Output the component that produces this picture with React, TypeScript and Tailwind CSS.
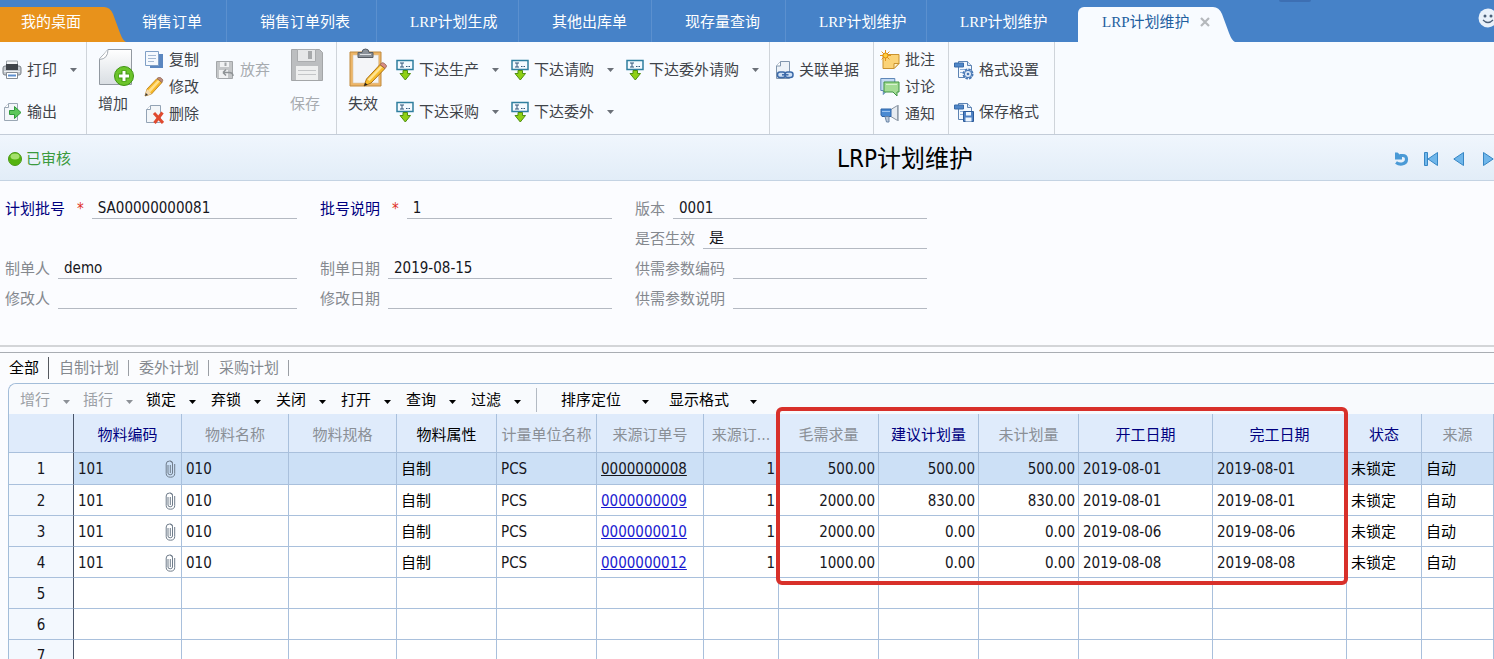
import React from "react";
import clsx from "clsx";

const tabs = [
  { name: "销售订单", className: "w-[101px] pl-4" },
  { name: "销售订单列表", className: "w-[150px] pl-[33px]" },
  { name: "LRP计划生成", className: "w-[142px] pl-[33px]" },
  { name: "其他出库单", className: "w-[133px] pl-[33px]" },
  { name: "现存量查询", className: "w-[134px] pl-[33px]" },
  { name: "LRP计划维护", className: "w-[141px] pl-[33px]" },
  { name: "LRP计划维护", className: "w-[142px] pl-[33px]" },
];

const gridActions = ["锁定", "弃锁", "关闭", "打开", "查询", "过滤"];

const columns = [
  { title: "物料编码", width: "w-[108px]", color: "text-[#00007f]" },
  { title: "物料名称", width: "w-[107px]", color: "text-[#8a8f96]" },
  { title: "物料规格", width: "w-[108px]", color: "text-[#8a8f96]" },
  { title: "物料属性", width: "w-[100px]", color: "text-black" },
  { title: "计量单位名称", width: "w-[100px]", color: "text-[#8a8f96]" },
  { title: "来源订单号", width: "w-[107px]", color: "text-[#8a8f96]" },
  { title: "来源订…", width: "w-[75px]", color: "text-[#8a8f96]" },
  { title: "毛需求量", width: "w-[100px]", color: "text-[#8a8f96]" },
  { title: "建议计划量", width: "w-[100px]", color: "text-[#00007f]" },
  { title: "未计划量", width: "w-[100px]", color: "text-[#8a8f96]" },
  { title: "开工日期", width: "w-[134px]", color: "text-[#00007f]" },
  { title: "完工日期", width: "w-[134px]", color: "text-[#00007f]" },
  { title: "状态", width: "w-[75px]", color: "text-[#00007f]" },
  { title: "来源", width: "", color: "text-[#8a8f96]" },
];

const rows = [
  { order: "0000000008", gross: "500.00", plan: "500.00", rest: "500.00", start: "2019-08-01", end: "2019-08-01" },
  { order: "0000000009", gross: "2000.00", plan: "830.00", rest: "830.00", start: "2019-08-01", end: "2019-08-01" },
  { order: "0000000010", gross: "2000.00", plan: "0.00", rest: "0.00", start: "2019-08-06", end: "2019-08-06" },
  { order: "0000000012", gross: "1000.00", plan: "0.00", rest: "0.00", start: "2019-08-08", end: "2019-08-08" },
];

/* ---------- icons ---------- */

const Caret = ({ className = "text-[#6b7078]" }: { className?: string }) => (
  <svg className={clsx("h-1 w-[7px] shrink-0", className)} viewBox="0 0 7 4">
    <path d="M0 0h7L3.5 4z" fill="currentColor" />
  </svg>
);

const PrintIcon = () => (
  <svg className="h-5 w-5 shrink-0" viewBox="0 0 20 20">
    <path d="M4.500 1h11v6h-11z" fill="#f4f6f8" stroke="#9aa1a8" />
    <rect x="1" y="6" width="18" height="9" rx="2" fill="#c3c8ce" stroke="#7a8087" />
    <rect x="4" y="4" width="12" height="6" fill="#3f444a" />
    <path d="M2 11.500h16" stroke="#eef0f2" />
    <path d="M4.500 12.500h11v6h-11z" fill="#fff" stroke="#858b92" />
    <path d="M6 15.500h8" stroke="#5d8fcf" strokeWidth="2" />
  </svg>
);

const ExportIcon = () => (
  <svg className="h-5 w-5 shrink-0" viewBox="0 0 20 20">
    <path d="M2.500 5.500l4-4h9v17h-13z" fill="#f3f6f9" stroke="#9aa7b4" />
    <path d="M2.500 5.500h4v-4" fill="#fff" stroke="#9aa7b4" />
    <path d="M7.500 8.500h5v-4l6.500 6-6.500 6v-4h-5z" fill="#5cc75a" stroke="#2f9a3a" />
  </svg>
);

const AddIcon = () => (
  <svg className="h-[39px] w-[37px]" viewBox="0 0 37 39">
    <defs>
      <linearGradient id="sheet" x1="0" y1="0" x2="0" y2="1">
        <stop offset="0" stopColor="#fff" />
        <stop offset="1" stopColor="#d9dee3" />
      </linearGradient>
    </defs>
    <path d="M1.500 11L10 1.500h23.500v35h-32z" fill="url(#sheet)" stroke="#9299a1" />
    <path d="M1.500 11.500Q10 11 10 1.500" fill="#fff" stroke="#a5abb2" />
    <circle cx="26" cy="28" r="9.500" fill="#6cc42b" stroke="#3f9412" />
    <path d="M26 22.500v11M20.500 28h11" stroke="#3f9412" strokeWidth="5" />
    <path d="M26 23v10M21 28h10" stroke="#fff" strokeWidth="3" />
  </svg>
);

const CopyIcon = () => (
  <svg className="h-5 w-5 shrink-0" viewBox="0 0 20 20">
    <path d="M6 4h13v14H6z" fill="#5a86c0" />
    <path d="M1.500 1.500h13v14h-13z" fill="#f5f9fe" stroke="#7f9fc6" />
    <path d="M4 5.500h8M4 8.500h8M4 11.500h6" stroke="#a4b9d3" />
  </svg>
);

const PencilIcon = () => (
  <svg className="h-5 w-5 shrink-0" viewBox="0 0 20 20">
    <path d="M1 19l2-7L13 1.500l5 4L7.500 17z" fill="#f7b928" stroke="#b57a15" strokeWidth=".8" />
    <path d="M4 13.500L14 3l1.800 1.400L6 15.500z" fill="#ffe08a" />
    <path d="M13 1.500l1.500-1.200q1-.5 2 .3l1.800 1.500q1 1 .3 1.900L18 5.500z" fill="#b98a7c" stroke="#8a5c45" strokeWidth=".6" />
    <path d="M1 19l2-7 4.500 5z" fill="#f3d9ae" />
    <path d="M1 19l.9-3 2.100 2z" fill="#333" />
  </svg>
);

const DeleteIcon = () => (
  <svg className="h-5 w-5 shrink-0" viewBox="0 0 20 20">
    <path d="M2.500 5.500l4-4h10v17h-14z" fill="#f3f6f9" stroke="#93a3b5" />
    <path d="M2.500 5.500h4v-4" fill="#fff" stroke="#93a3b5" />
    <path d="M10 9l9 10M18.500 8.500l-8 10.500" stroke="#e04a2f" strokeWidth="3" />
  </svg>
);

const DiscardIcon = () => (
  <svg className="h-5 w-5 shrink-0" viewBox="0 0 20 20">
    <path d="M1.500 1.500h16v17h-15l-1-1z" fill="#c4c6c8" stroke="#a3a6a9" />
    <path d="M5 2h9v5H5z" fill="#f1f2f3" />
    <path d="M10.500 2.500v3.500" stroke="#a3a6a9" strokeWidth="2" />
    <path d="M4 10h9v8H4z" fill="#f1f2f3" />
    <path d="M8 12.500h6q4 0 4 3.500M8 12.500l3-3M8 12.500l3 3" fill="none" stroke="#8f9396" strokeWidth="1.500" />
  </svg>
);

const SaveIcon = () => (
  <svg className="h-[34px] w-[34px]" viewBox="0 0 34 34">
    <path d="M1.500 1.500h28l3 3v28h-31z" fill="#bcbec0" stroke="#a4a6a8" />
    <path d="M7.500 1.500h18v12h-18z" fill="#e6e7e8" stroke="#aaacae" />
    <path d="M18 3h4v8h-4z" fill="#a7a9ab" />
    <path d="M6 18h22v14H6z" fill="#eeefef" />
    <path d="M8 22.500h18M8 26.500h18" stroke="#c3c5c7" />
  </svg>
);

const InvalidIcon = () => (
  <svg className="h-[40px] w-[39px]" viewBox="0 0 39 40">
    <path d="M2 4h31v34H2z" fill="#edb567" stroke="#c08a3f" />
    <path d="M5 7h25.500v28H5z" fill="#f4f5f8" stroke="#d9c7ac" strokeWidth=".6" />
    <path d="M10 9.500V4.500h4Q14 1 17.500 1T21 4.500h4v5z" fill="#8b9199" stroke="#565c64" />
    <path d="M12 6.500h11" stroke="#dde0e4" />
    <path d="M16 38l2.500-7L32 16.500l5 4L23 35z" fill="#f8bd2c" stroke="#a9701a" />
    <path d="M19.500 31.500L32.500 18l1.800 1.500L21.500 33z" fill="#ffe492" />
    <path d="M32 16.500l1.500-1.500q1.300-.8 2.500.2l2 1.700q1 1.100.2 2.100L37 20.500z" fill="#d98d83" stroke="#8a5c45" strokeWidth=".7" />
    <path d="M16 38l1.200-3.300 2.400 2z" fill="#222" />
  </svg>
);

const IssueIcon = () => (
  <svg className="h-[22px] w-[18px] shrink-0" viewBox="0 0 18 22">
    <path d="M1 1.500h16v9H1z" fill="#f4faff" stroke="#2f7f9f" strokeWidth="1.500" />
    <path d="M4 4h4M6 4v4M4 8h4M10 7.500h1.500M12.500 7.500H14" stroke="#30577a" />
    <path d="M7 11.500h4.500V14.500H14.500l-5.200 6.500L4 14.500h3z" fill="#8fd014" stroke="#4f8f12" />
  </svg>
);

const LinkedIcon = () => (
  <svg className="h-5 w-5 shrink-0" viewBox="0 0 20 20">
    <path d="M2.500 6l4-4.500h9v17h-13z" fill="#eef3f8" stroke="#8296ad" />
    <path d="M2.500 6h4V1.500" fill="#fff" stroke="#8296ad" />
    <rect x="3.500" y="12" width="8" height="5.500" rx="2.500" fill="#cfe0f5" stroke="#3b69a8" strokeWidth="1.500" />
    <rect x="11" y="12" width="8" height="5.500" rx="2.500" fill="#cfe0f5" stroke="#3b69a8" strokeWidth="1.500" />
    <path d="M8 14.800h6.500" stroke="#3b69a8" strokeWidth="1.500" />
  </svg>
);

const NoteIcon = () => (
  <svg className="h-5 w-5 shrink-0" viewBox="0 0 20 20">
    <path d="M3 4.500h16v9l-5 5H3z" fill="#fbd377" stroke="#c9922f" />
    <path d="M19 13.500h-5v5z" fill="#fff2cc" stroke="#c9922f" />
    <path d="M5.500 0v11M0 5.500h11M1.600 1.600l7.800 7.800M9.400 1.600L1.600 9.400" stroke="#e69316" />
    <circle cx="5.500" cy="5.500" r="2.500" fill="#ffcf3e" stroke="#dc8b12" />
  </svg>
);

const ChatIcon = () => (
  <svg className="h-5 w-5 shrink-0" viewBox="0 0 20 20">
    <path d="M.8 1.500h14v12h-8l-3.500 4v-4H.8z" fill="#c4daf3" stroke="#5f87b8" />
    <path d="M4 5h15v10h-2v4l-4-4H4z" fill="#a4dc95" stroke="#3f9343" />
    <path d="M6 7.500h11" stroke="#d7f2cf" />
  </svg>
);

const NoticeIcon = () => (
  <svg className="h-5 w-5 shrink-0" viewBox="0 0 20 20">
    <path d="M10 6l7.500-4.500v15L10 12z" fill="#e6ebf1" stroke="#8893a0" />
    <path d="M1 5h10v7.500H2L1 11z" fill="#4a8ad2" stroke="#2d62a5" />
    <path d="M2 7.500h8" stroke="#9cc4f1" />
    <path d="M5 12.500h4v5.500H6.500z" fill="#b9c8da" stroke="#6884a6" />
    <path d="M18 1v16" stroke="#9aa4b0" strokeWidth="1.500" />
  </svg>
);

const FormatIcon = ({ saved }: { saved?: boolean }) => (
  <svg className="h-5 w-5 shrink-0" viewBox="0 0 20 20">
    <path d="M4.500 1.500h9l4 4v12h-13z" fill="#f3f8fe" stroke="#5d83b3" />
    <path d="M13.500 1.500v4h4" fill="#dbe8f8" stroke="#5d83b3" />
    <path d="M.5 3h9v4h-9z" fill="#4f86c8" stroke="#386aa8" />
    <path d="M6 9.500h5M6 12.500h4" stroke="#8fb0da" />
    {saved ? (
      <>
        <path d="M9.500 9.500h10v10h-10z" fill="#4d80c4" stroke="#2c5a98" />
        <path d="M12 10h5v3.500h-5zM11.500 15.500h6v4h-6z" fill="#eef5fd" />
      </>
    ) : (
      <>
        <circle cx="14" cy="14" r="4.500" fill="#dfeaf8" stroke="#4676b4" strokeWidth="2" strokeDasharray="2.400 1.100" />
        <circle cx="14" cy="14" r="3.600" fill="#dfeaf8" stroke="#4676b4" />
        <circle cx="14" cy="14" r="1.300" fill="#4676b4" />
      </>
    )}
  </svg>
);

const ClipIcon = () => (
  <svg className="h-[18px] w-[11px]" viewBox="0 0 11 18">
    <path
      d="M3 5v8q0 1.800 2.200 1.800T7.500 13V3.500Q7.500 1 5.300 1M9.700 4v9.500q0 3.700-4.200 3.700T1.200 13.500V4Q1.200 1 4.700 1q2.800 0 2.800 2.700M5.300 5v8"
      fill="none"
      stroke="#6f7c8a"
    />
  </svg>
);

/* ---------- ribbon ---------- */

type ToolProps = {
  icon: React.ReactNode;
  label: string;
  caret?: boolean;
  disabled?: boolean;
  className?: string;
};

const Tool = ({ icon, label, caret, disabled, className = "h-[42px]" }: ToolProps) => (
  <button
    type="button"
    disabled={disabled}
    className={clsx("flex items-center gap-[5px] whitespace-nowrap", disabled && "text-[#a7abb0]", className)}
  >
    {icon}
    <span>{label}</span>
    {caret && <Caret className="ml-2 text-[#6b7078]" />}
  </button>
);

const BigTool = ({ icon, label, disabled }: ToolProps) => (
  <button
    type="button"
    disabled={disabled}
    className={clsx("flex flex-col items-start whitespace-nowrap", disabled && "text-[#a7abb0]")}
  >
    <span className="flex h-[45px] items-start">{icon}</span>
    <span>{label}</span>
  </button>
);

const Ribbon = () => (
  <div className="flex h-[93px] shrink-0 border-b border-[#c3ccd8] bg-[#f8fbff] text-[#3f4349] *:shrink-0 *:border-r *:border-[#cfd4da]">
    <div className="flex w-[87px] flex-col pt-[7px] pl-[2px]">
      <Tool icon={<PrintIcon />} label="打印" caret />
      <Tool icon={<ExportIcon />} label="输出" />
    </div>
    <div className="flex w-[250px] pl-[11px]">
      <div className="w-[46px] pt-1.5">
        <BigTool icon={<AddIcon />} label="增加" />
      </div>
      <div className="flex w-[71px] flex-col pt-1">
        <Tool icon={<CopyIcon />} label="复制" className="h-[27px]" />
        <Tool icon={<PencilIcon />} label="修改" className="h-[27px]" />
        <Tool icon={<DeleteIcon />} label="删除" className="h-[27px]" />
      </div>
      <div className="w-[75px] pt-[7px]">
        <Tool icon={<DiscardIcon />} label="放弃" disabled />
      </div>
      <div className="pt-1.5">
        <BigTool icon={<SaveIcon />} label="保存" disabled />
      </div>
    </div>
    <div className="flex w-[433px] pl-[11px]">
      <div className="w-12 pt-1.5">
        <BigTool icon={<InvalidIcon />} label="失效" />
      </div>
      <div className="w-[115px] pt-[7px]">
        <Tool icon={<IssueIcon />} label="下达生产" caret />
        <Tool icon={<IssueIcon />} label="下达采购" caret />
      </div>
      <div className="w-[115px] pt-[7px]">
        <Tool icon={<IssueIcon />} label="下达请购" caret />
        <Tool icon={<IssueIcon />} label="下达委外" caret />
      </div>
      <div className="pt-[7px]">
        <Tool icon={<IssueIcon />} label="下达委外请购" caret />
      </div>
    </div>
    <div className="w-[104px] pt-[7px] pl-1">
      <Tool icon={<LinkedIcon />} label="关联单据" />
    </div>
    <div className="w-[75px] pt-1 pl-1.5">
      <Tool icon={<NoteIcon />} label="批注" className="h-[27px]" />
      <Tool icon={<ChatIcon />} label="讨论" className="h-[27px]" />
      <Tool icon={<NoticeIcon />} label="通知" className="h-[27px]" />
    </div>
    <div className="w-[106px] pt-[7px] pl-[5px]">
      <Tool icon={<FormatIcon />} label="格式设置" />
      <Tool icon={<FormatIcon saved />} label="保存格式" />
    </div>
  </div>
);

/* ---------- top tabs ---------- */

const TabSlope = ({ className }: { className: string }) => (
  <svg className={clsx("h-[35px] w-[22px] shrink-0", className)} viewBox="0 0 22 35">
    <path d="M0 0Q6 0 9 7L16 26Q19 34 22 35H0z" fill="currentColor" />
  </svg>
);

const TabBar = () => (
  <nav className="flex h-[42px] shrink-0 items-end overflow-hidden bg-[#4682c8] font-['Liberation_Serif','Noto_Sans_CJK_SC',serif] text-white *:shrink-0">
    <button type="button" className="h-[35px] w-[104px] bg-[#e8921b] pb-1.5 pl-[21px] text-left">
      我的桌面
    </button>
    <TabSlope className="text-[#e8921b]" />
    {tabs.map((tab, i) => (
      <button
        key={i}
        type="button"
        className={clsx(
          "h-[42px] pt-px text-left whitespace-nowrap",
          i < tabs.length - 1 && "border-r border-[#5b90cf]",
          tab.className
        )}
      >
        {tab.name}
      </button>
    ))}
    <div className="ml-[9px] flex h-[35px] w-[135px] items-center gap-2.5 rounded-tl-md bg-[#f8fbff] pb-1.5 pl-6">
      <button type="button" className="whitespace-nowrap text-[#1f5f9f]">
        LRP计划维护
      </button>
      <button type="button" aria-label="关闭标签">
        <svg className="h-[10px] w-[10px]" viewBox="0 0 10 10">
          <path d="M1 1l8 8M9 1L1 9" stroke="#b4b8bc" strokeWidth="2.200" />
        </svg>
      </button>
    </div>
    <TabSlope className="text-[#f8fbff]" />
    <span className="ml-11 h-[2px] w-8 self-start rounded-b-full bg-[#3d6fb3]" />
    <svg className="ml-auto -mr-1 h-[34px] w-5" viewBox="0 0 20 34">
      <circle cx="10" cy="10" r="9.500" fill="#e9f1fa" />
      <circle cx="7" cy="8" r="1.500" fill="#4b5f78" />
      <circle cx="13" cy="8" r="1.500" fill="#4b5f78" />
      <path d="M5 12q5 5 10 0" fill="none" stroke="#4b5f78" strokeWidth="1.200" />
    </svg>
  </nav>
);

/* ---------- title ---------- */

const TitleBar = () => (
  <header className="flex h-[46px] shrink-0 items-center overflow-hidden border-b border-[#c4d3e3] bg-linear-to-b from-[#f0f6fd] to-[#e2edf8] pt-[2px]">
    <div className="flex w-[416px] items-center gap-1 pl-2 text-[#3a9a3e]">
      <svg className="h-[14px] w-[14px]" viewBox="0 0 14 14">
        <circle cx="7" cy="7" r="6.500" fill="#55b30f" stroke="#4c9a17" />
        <ellipse cx="7" cy="4.500" rx="4.500" ry="3" fill="#a5e06b" />
      </svg>
      <span>已审核</span>
    </div>
    <h1 className="flex-1 text-center text-2xl text-black">LRP计划维护</h1>
    <div className="flex items-center gap-[15px] *:shrink-0">
      <button type="button" aria-label="刷新">
        <svg className="h-[15px] w-[15px]" viewBox="0 0 15 15">
          <path d="M2 11.500q3 2 6 1.500 4.500-1 4.500-4.800T8.500 4.500H6" fill="none" stroke="#4a9ad6" strokeWidth="3.200" />
          <path d="M1 1.500h2.500l4.500 4v3H1z" fill="#4a9ad6" />
        </svg>
      </button>
      <button type="button" aria-label="首张">
        <svg className="h-[14px] w-[14px]" viewBox="0 0 14 14">
          <path d="M.5.500h3v13h-3zM13.500.500v13L4 7z" fill="#6fb6ea" stroke="#3786c4" />
        </svg>
      </button>
      <button type="button" aria-label="上张">
        <svg className="h-[14px] w-[11px]" viewBox="0 0 11 14">
          <path d="M10.500.500v13L.8 7z" fill="#6fb6ea" stroke="#3786c4" />
        </svg>
      </button>
      <button type="button" aria-label="下张" className="pl-1">
        <svg className="h-[14px] w-[11px]" viewBox="0 0 11 14">
          <path d="M.5.500v13L10.200 7z" fill="#6fb6ea" stroke="#3786c4" />
        </svg>
      </button>
    </div>
  </header>
);

/* ---------- form ---------- */

type FieldProps = { id: string; label: string; value?: string; required?: boolean };

const Field = ({ id, label, value = "", required }: FieldProps) => (
  <div className="flex h-[30px] items-start gap-2 pt-1">
    <label htmlFor={id} className={clsx("leading-6 whitespace-nowrap", required ? "text-[#00007f]" : "text-[#85898f]")}>
      {label}
      {required && <span className="ml-3 text-[#e0301e]">*</span>}
    </label>
    <input
      id={id}
      defaultValue={value}
      className="h-[22px] w-0 flex-1 border-b border-[#b4b9c2] bg-transparent px-1.5 pt-px text-[#16161c] outline-none"
    />
  </div>
);

const HeaderForm = () => (
  <form className="grid h-[166px] shrink-0 grid-cols-[292px_292px_292px] content-start gap-x-[23px] border-b-2 border-[#d3d5d8] bg-[#fbfcff] pt-3 pl-[5px]">
    <div>
      <Field id="batch" label="计划批号" value="SA00000000081" required />
      <div className="h-[30px]" />
      <Field id="creator" label="制单人" value="demo" />
      <Field id="modifier" label="修改人" />
    </div>
    <div>
      <Field id="batch-note" label="批号说明" value="1" required />
      <div className="h-[30px]" />
      <Field id="created" label="制单日期" value="2019-08-15" />
      <Field id="modified" label="修改日期" />
    </div>
    <div>
      <Field id="version" label="版本" value="0001" />
      <Field id="active" label="是否生效" value="是" />
      <Field id="param-code" label="供需参数编码" />
      <Field id="param-note" label="供需参数说明" />
    </div>
  </form>
);

/* ---------- grid ---------- */

const PlanTabs = () => (
  <div className="mt-[5px] flex h-[31px] shrink-0 items-center border-t border-[#a9adb3] bg-[#fbfcfe] pl-[9px] text-[#85898f]">
    <button type="button" className="h-[22px] border-r border-[#55595f] pr-[9px] leading-[22px] text-black">
      全部
    </button>
    {["自制计划", "委外计划", "采购计划"].map((name) => (
      <button key={name} type="button" className="h-4 border-r border-[#9a9ea4] pr-[9px] pl-[10px] leading-4 whitespace-nowrap">
        {name}
      </button>
    ))}
  </div>
);

const GridToolbar = () => (
  <div className="flex h-[30px] items-center rounded-tl-lg bg-[#f8fafd] pt-px pl-[11px] text-black">
    {["增行", "插行"].map((name) => (
      <button key={name} type="button" disabled className="flex w-[63px] items-center gap-[13px] whitespace-nowrap text-[#9b9fa5]">
        {name}
        <Caret className="mt-1 text-[#8d9197]" />
      </button>
    ))}
    {gridActions.map((name) => (
      <button key={name} type="button" className="flex w-[65px] items-center gap-[13px] whitespace-nowrap">
        {name}
        <Caret className="mt-1 text-black" />
      </button>
    ))}
    <span className="mr-6 h-6 w-px bg-[#b3bac3]" />
    {["排序定位", "显示格式"].map((name) => (
      <button key={name} type="button" className="flex w-[108px] items-center gap-[21px] whitespace-nowrap">
        {name}
        <Caret className="mt-1 text-black" />
      </button>
    ))}
  </div>
);

const PlanTable = () => (
  <table className="w-full table-fixed border-separate border-spacing-0 [&_td]:overflow-hidden [&_td]:border-r [&_td]:border-b [&_td]:border-[#a9c0dc] [&_td]:p-0 [&_td]:pt-px [&_td]:whitespace-nowrap [&_th]:overflow-hidden [&_th]:border-r [&_th]:border-b [&_th]:border-[#a9c0dc] [&_th]:p-0 [&_th]:pt-[3px] [&_th]:font-normal [&_th]:whitespace-nowrap">
    <thead>
      <tr className="h-[39px] bg-[#dfebfb]">
        <th className="w-[65px] border-r-[#4a5568]!" />
        {columns.map((col) => (
          <th key={col.title} className={clsx(col.width, col.color)}>
            {col.title}
          </th>
        ))}
      </tr>
    </thead>
    <tbody className="text-[#16161c]">
      {rows.map((row, i) => (
        <tr key={row.order} className={i === 0 ? "h-8 bg-[#cce0f6]" : "h-[31px] bg-white"}>
          <td className="border-r-[#4a5568]! bg-[#f3f8fe] text-center">{i + 1}</td>
          <td>
            <div className="flex items-center justify-between pr-[5px] pl-1">
              101
              <ClipIcon />
            </div>
          </td>
          <td className="pl-1!">010</td>
          <td />
          <td className="pl-1! text-black">自制</td>
          <td className="pl-1!">PCS</td>
          <td className="pl-1!">
            <a href="#" className={clsx("underline", i === 0 ? "text-[#16161c]" : "text-[#1a1ad0]")}>
              {row.order}
            </a>
          </td>
          <td className="pr-[3px]! text-right">1</td>
          <td className="pr-[3px]! text-right">{row.gross}</td>
          <td className="pr-[3px]! text-right">{row.plan}</td>
          <td className="pr-[3px]! text-right">{row.rest}</td>
          <td className="pl-1!">{row.start}</td>
          <td className="pl-1!">{row.end}</td>
          <td className="pl-1! text-black">未锁定</td>
          <td className="pl-1! text-black">自动</td>
        </tr>
      ))}
      {[5, 6, 7].map((n) => (
        <tr key={n} className="h-[31px] bg-white">
          <td className="border-r-[#4a5568]! bg-[#f3f8fe] text-center">{n}</td>
          {columns.map((col) => (
            <td key={col.title} />
          ))}
        </tr>
      ))}
    </tbody>
  </table>
);

const App = () => {
  return (
    <div className="flex h-screen flex-col overflow-hidden bg-[#fbfcff] font-['DejaVu_Sans_Condensed','Noto_Sans','Noto_Sans_CJK_SC',sans-serif] text-[15px] leading-[22px]">
      <TabBar />
      <Ribbon />
      <TitleBar />
      <HeaderForm />
      <PlanTabs />
      <section className="relative ml-2 flex-1 rounded-tl-lg border-t border-l border-[#a3bdd9]">
        <GridToolbar />
        <PlanTable />
        {/* highlighted quantities and dates */}
        <div className="pointer-events-none absolute top-[23px] left-[767px] h-[178px] w-[572px] rounded-md border-4 border-[#d8302a]" />
      </section>
    </div>
  );
};

export default App;
